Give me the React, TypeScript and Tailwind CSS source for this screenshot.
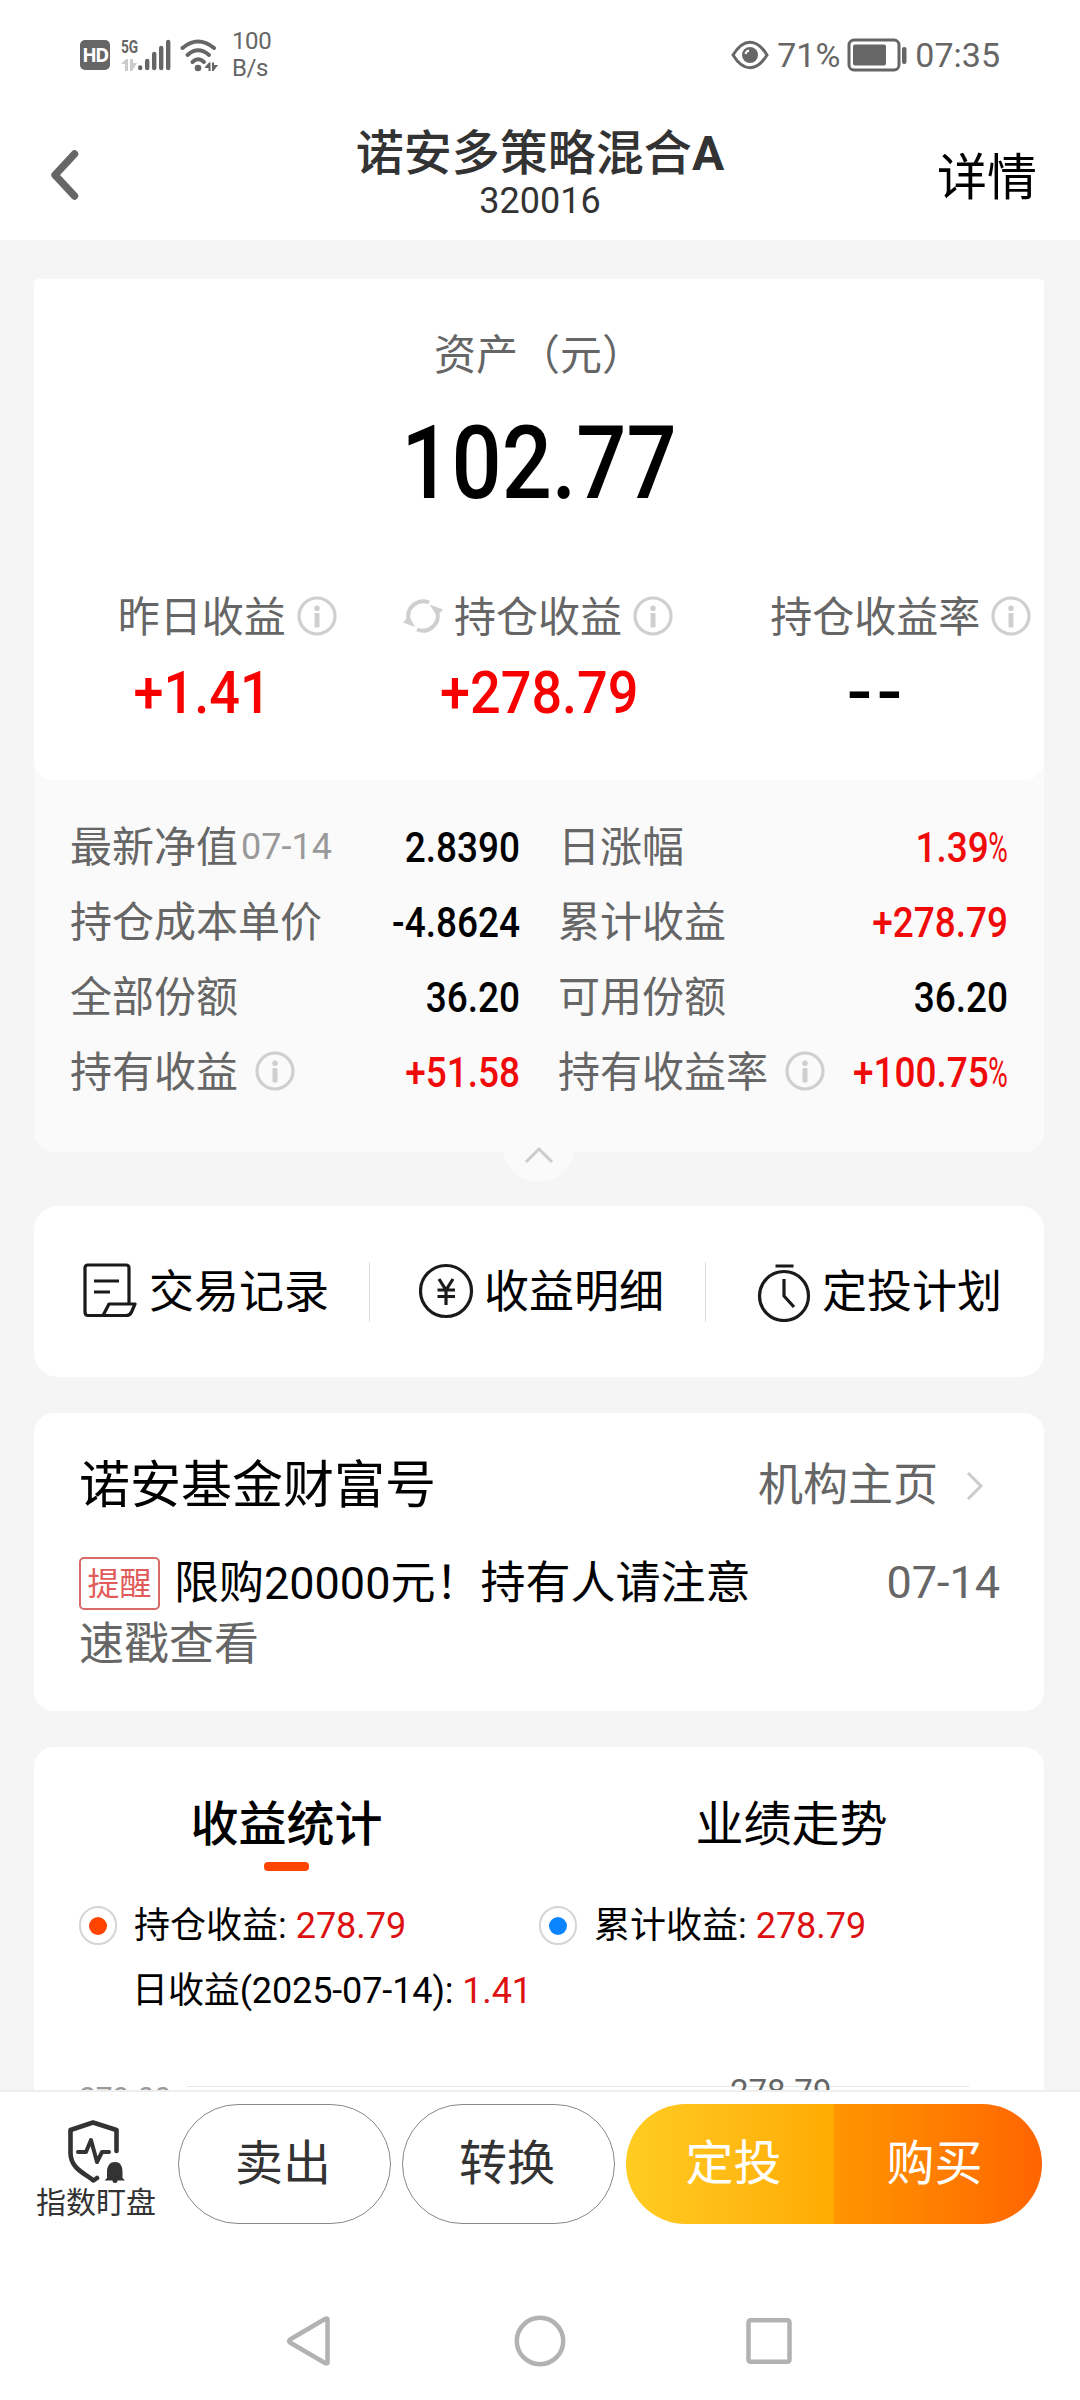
import type { ReactNode } from 'react'

type Detail = {
  label: string
  date?: string
  info?: boolean
  value: string
  percent?: boolean
  up?: boolean
}

const details: Detail[] = [
  { label: '最新净值', date: '07-14', value: '2.8390' },
  { label: '日涨幅', value: '1.39', percent: true, up: true },
  { label: '持仓成本单价', value: '-4.8624' },
  { label: '累计收益', value: '+278.79', up: true },
  { label: '全部份额', value: '36.20' },
  { label: '可用份额', value: '36.20' },
  { label: '持有收益', info: true, value: '+51.58', up: true },
  { label: '持有收益率', info: true, value: '+100.75', percent: true, up: true },
]

function InfoIcon({ className = '' }: { className?: string }) {
  return (
    <svg viewBox="0 0 40 40" className={`w-10 h-10 shrink-0 ${className}`} fill="none">
      <circle cx="20" cy="20" r="18" stroke="#cfcfcf" strokeWidth="3.2" />
      <circle cx="20" cy="12.3" r="2.8" fill="#cfcfcf" />
      <rect x="17.5" y="17" width="5" height="14.5" rx="1" fill="#cfcfcf" />
    </svg>
  )
}

function RefreshIcon({ className = '' }: { className?: string }) {
  return (
    <svg viewBox="0 0 40 36" className={`w-10 h-9 shrink-0 ${className}`} fill="none">
      <path d="M5.5 21 A15 15 0 0 1 26 4.5" stroke="#cfcfcf" strokeWidth="4" />
      <path d="M34.5 15 A15 15 0 0 1 14 31.5" stroke="#cfcfcf" strokeWidth="4" />
      <path d="M0 24.5 L6 18 L12 29 Z" fill="#cfcfcf" />
      <path d="M40 11.5 L34 18 L26.5 6.5 Z" fill="#cfcfcf" />
    </svg>
  )
}

function StatusBar() {
  return (
    <div className="flex items-center h-[110px] pl-20 pr-20 text-[#666]">
      <div className="flex items-center justify-center w-[30px] h-[30px] rounded-[5px] bg-[#666] text-white text-[19px] leading-none font-bold font-['Noto_Sans']">
        <span className="tracking-[-1.5px]">HD</span>
      </div>
      <div className="flex flex-col ml-[11px] w-[17px] h-8">
        <span className="text-[19px] leading-[15px] font-bold origin-left scale-x-[0.72]">5G</span>
        <svg viewBox="0 0 16 12" className="w-4 h-3 mt-[5px]" fill="#ccc">
          <path d="M0 5 L5 0 H7 V12 H4 V5 Z" />
          <path d="M9 0 H12 V4 H16 L11 12 H9 Z" />
        </svg>
      </div>
      <svg viewBox="0 0 34 32" className="w-[34px] h-8" stroke="#666" strokeWidth="4.4" strokeLinecap="round">
        <path d="M2.2 28.5 V29" />
        <path d="M9.2 22 V29" />
        <path d="M16.2 15 V29" />
        <path d="M23.2 9 V29" />
        <path d="M30.2 3 V29" />
      </svg>
      <svg viewBox="0 0 38 34" className="w-[38px] h-[34px] ml-2" fill="none" stroke="#666" strokeWidth="4" strokeLinecap="round">
        <path d="M2.5 10 Q18 -3 34 10" />
        <path d="M7.5 17 Q18 7.5 29 17" />
        <path d="M12.5 24 Q18 18.5 24 24" />
        <circle cx="18" cy="30" r="3.3" fill="#666" stroke="none" />
        <path d="M25 29 L29 24.5 H30.5 V33 H28.5 V30 H25 Z M32 24.5 H34 V27 H38 L33.5 33 H32 Z" fill="#666" stroke="none" />
      </svg>
      <div className="ml-[14px] text-[24px] leading-[27px] tracking-[-0.4px]">
        <p>100</p>
        <p>B/s</p>
      </div>

      <div className="flex items-center ml-auto text-[34px]">
        <svg viewBox="0 0 38 30" className="w-[38px] h-[30px]" fill="none">
          <path d="M2 15 C9 3.5 15 2.2 19 2.2 S29 3.5 36 15 C29 26.5 23 27.8 19 27.8 S9 26.5 2 15 Z" stroke="#666" strokeWidth="3" />
          <circle cx="19" cy="15" r="8" fill="#666" />
          <path d="M14.5 14 A4.5 4.5 0 0 1 18 10.5" stroke="#fff" strokeWidth="2" />
        </svg>
        <span className="ml-2 leading-none">71%</span>
        <svg viewBox="0 0 62 34" className="w-[62px] h-[34px] ml-[7px]" fill="none">
          <rect x="2" y="2" width="50" height="30" rx="5" stroke="#666" strokeWidth="3" />
          <rect x="6" y="6.5" width="33" height="21" rx="2" fill="#666" />
          <rect x="55" y="9" width="4.5" height="17" rx="2" fill="#666" />
        </svg>
        <span className="ml-[6px] leading-none">07:35</span>
      </div>
    </div>
  )
}

function TitleBar() {
  return (
    <div className="grid grid-cols-[1fr_auto_1fr] h-[130px] px-[43px]">
      <svg viewBox="0 0 30 52" className="w-[30px] h-[52px] ml-[7px] mt-[39px]" fill="none" stroke="#666" strokeWidth="7.5" strokeLinecap="round" strokeLinejoin="round">
        <path d="M24.5 5 L5 26 L24.5 47" />
      </svg>
      <div className="pt-[17px] text-center text-[#333]">
        <h1 className="text-[48px] leading-[54px] font-medium">诺安多策略混合<b>A</b></h1>
        <p className="text-[36px] leading-[41px]">320016</p>
      </div>
      <span className="justify-self-end mt-[38px] text-[50px] leading-[60px] text-black">详情</span>
    </div>
  )
}

function Stat({ label, value, up, refresh }: { label: string; value: ReactNode; up?: boolean; refresh?: boolean }) {
  return (
    <div className="flex flex-col items-center">
      <div className="flex items-center h-[50px] text-[42px] leading-[50px] text-[#666] whitespace-nowrap">
        {refresh && <RefreshIcon className="-ml-[52px] mr-[11px] -mt-1" />}
        <span>{label}</span>
        <InfoIcon className="ml-[11px] -mr-[50px] -mt-1" />
      </div>
      <p className={`mt-5 text-[60px] leading-[60px] font-medium scale-x-[0.9] ${up ? 'text-[#f80000]' : 'text-black'}`}>{value}</p>
    </div>
  )
}

function AssetCard() {
  return (
    <section className="relative rounded-t-[5px] rounded-b-[20px] bg-[#fafafa]">
      <div className="h-[501px] pt-[50px] rounded-t-[5px] rounded-b-[20px] bg-white">
        <p className="text-center text-[42px] leading-[54px] text-[#666]">资产（元）</p>
        <p className="mt-5 text-center text-[102px] leading-[120px] font-medium text-black scale-x-[0.865]">102.77</p>
        <div className="grid grid-cols-3 mt-[70px]">
          <Stat label="昨日收益" value="+1.41" up />
          <Stat label="持仓收益" value="+278.79" up refresh />
          <Stat label="持仓收益率" value={<span className="inline-block font-bold tracking-[2px] scale-x-[1.3]">--</span>} />
        </div>
      </div>

      <div className="grid grid-cols-2 gap-x-[38px] h-[372px] px-[36px] pt-[30px] content-start">
        {details.map(item => (
          <div key={item.label} className="flex items-center h-[75px] text-[42px] leading-[75px] text-[#666] whitespace-nowrap">
            <span>{item.label}</span>
            {item.date && <span className="ml-[3px] text-[36px] text-[#999]">{item.date}</span>}
            {item.info && <InfoIcon className="ml-[17px] -mt-1" />}
            <span className={`flex-1 w-0 flex justify-end font-medium origin-right scale-x-[0.88] ${item.up ? 'text-[#f00a0a]' : 'text-black'}`}>
              {item.value}
              {item.percent && <span className="font-normal origin-right scale-x-[0.72] -ml-[9px]">%</span>}
            </span>
          </div>
        ))}
      </div>

      {/* Collapse handle */}
      <div className="absolute left-[468px] -bottom-[30px] w-[73px] h-[73px] rounded-full bg-[#fafafa] flex justify-center pt-[37px]">
        <svg viewBox="0 0 30 18" className="w-[30px] h-[18px]" fill="none" stroke="#ccc" strokeWidth="3">
          <path d="M2 16 L15 3 L28 16" />
        </svg>
      </div>
    </section>
  )
}

function QuickLinks() {
  return (
    <section className="flex items-center mt-[54px] h-[171px] rounded-[24px] bg-white text-[45px] leading-[60px] text-black">
      <div className="flex items-center w-[335px] pl-[49px]">
        <svg viewBox="0 0 56 60" className="w-14 h-[60px]" fill="none" stroke="#1a1a1a" strokeWidth="3.2" strokeLinejoin="round">
          <path d="M46 42 V6 Q46 3 43 3 H5 Q2 3 2 6 V50 Q2 53.5 5 53.5 H43 Q47 53.5 48.5 50 L52 42 H26 L20 53.5" />
          <path d="M11 19 H36 M11 30 H27" />
        </svg>
        <span className="ml-[10px] pt-[3px]">交易记录</span>
      </div>
      <div className="w-px h-[60px] bg-[#ddd]" />
      <div className="flex items-center w-[335px] pl-[49px]">
        <svg viewBox="0 0 56 60" className="w-14 h-[60px]" fill="none" stroke="#1a1a1a" strokeWidth="3.2">
          <circle cx="27" cy="29" r="25.5" />
          <path d="M20 17 L27 28 L34 17 M27 28 V43 M18.5 28 H36 M18.5 34.5 H36" />
        </svg>
        <span className="ml-[9px] pt-[3px]">收益明细</span>
      </div>
      <div className="w-px h-[60px] bg-[#ddd]" />
      <div className="flex items-center flex-1 pl-[50px]">
        <svg viewBox="0 0 56 60" className="w-14 h-[60px]" fill="none" stroke="#1a1a1a" strokeWidth="3.2">
          <circle cx="28" cy="34" r="24.5" />
          <path d="M19.5 4 H37.5 M28 17 V34 L38 45" />
        </svg>
        <span className="ml-[10px] pt-[3px]">定投计划</span>
      </div>
    </section>
  )
}

function WealthAccount() {
  return (
    <section className="mt-9 h-[298px] pt-[43px] pl-[45px] pr-[44px] rounded-[20px] bg-white">
      <div className="flex items-center h-[60px]">
        <h2 className="text-[51px] leading-[60px] text-black">诺安基金财富号</h2>
        <span className="ml-auto text-[45px] leading-[60px] text-[#666]">机构主页</span>
        <svg viewBox="0 0 18 30" className="w-[18px] h-[30px] ml-[28px] mr-[16px]" fill="none" stroke="#ccc" strokeWidth="3">
          <path d="M2 2 L15 15 L2 28" />
        </svg>
      </div>
      <div className="flex items-center mt-10 h-[54px] text-[45px] leading-[54px]">
        <span className="w-[81px] h-[53px] rounded-[5px] border-2 border-[#d86a6a] text-center text-[32px] leading-[50px] text-[#e25b5b]">提醒</span>
        <span className="ml-[14px] pt-[2px] text-black">限购20000元！持有人请注意</span>
        <span className="ml-auto text-[#666]">07-14</span>
      </div>
      <p className="mt-2 text-[45px] leading-[54px] text-[#666]">速戳查看</p>
    </section>
  )
}

function Radio({ className }: { className: string }) {
  return (
    <span className="flex items-center justify-center w-[38px] h-[39px] rounded-full border-2 border-[#d5d5d5]">
      <span className={`w-[18px] h-[18px] rounded-full ${className}`} />
    </span>
  )
}

function ProfitStats() {
  return (
    <section className="mt-9 h-[500px] pt-12 rounded-t-[20px] bg-white text-black">
      <div className="grid grid-cols-2 text-center text-[48px] leading-[60px]">
        <div>
          <p className="font-medium">收益统计</p>
          <div className="mx-auto mt-[7px] w-[45px] h-[9px] rounded-[4px] bg-[#ff4400]" />
        </div>
        <p>业绩走势</p>
      </div>
      <div className="flex mt-[35px] pl-[45px] text-[36px] leading-[41px]">
        <div className="flex w-[460px] h-[39px]">
          <Radio className="bg-[#ff4400]" />
          <span className="ml-[17px]">持仓收益: <span className="text-[#dd1111]">278.79</span></span>
        </div>
        <div className="flex h-[39px]">
          <Radio className="bg-[#0a84ff]" />
          <span className="ml-[17px]">累计收益: <span className="text-[#dd1111]">278.79</span></span>
        </div>
      </div>
      <p className="mt-[26px] pl-[98px] text-[36px] leading-[40px] tracking-[-0.12px]">
        日收益(2025-07-14): <span className="text-[#dd1111]">1.41</span>
      </p>
      {/* Chart, mostly hidden behind the action bar */}
      <div className="relative h-[200px]">
        <div className="absolute left-[153px] right-[75px] top-[75px] h-px bg-[#e8e8e8]" />
        <span className="absolute left-[45px] top-[72px] text-[30px] leading-[30px] text-[#999]">279.00</span>
        <span className="absolute left-[696px] top-[64px] text-[33px] leading-[33px] text-[#666]">278.79</span>
      </div>
    </section>
  )
}

function ActionBar() {
  return (
    <div className="flex h-[170px] pt-3 border-t-2 border-[#eee] text-[48px] leading-[118px] text-[#333]">
      <div className="flex flex-col items-center w-[178px] pl-[16px] pt-[15px]">
        <svg viewBox="0 0 60 64" className="w-[60px] h-16" fill="none" stroke="#333" strokeWidth="4.6" strokeLinejoin="round" strokeLinecap="round">
          <path d="M49.5 32 V11 L26 3.5 L3.5 11 V34 C3.5 50 19 55 26.5 61.5 L30 59" />
          <path d="M11 33 H19 L24 21 L30 43 L35 33 H42" strokeWidth="4" />
          <path d="M48 43 C42 43 40 48 40 53 V59 L37.5 61.5 H58 L55.5 59 V53 C55.5 48 54 43 48 43 Z" fill="#333" stroke="none" />
          <circle cx="48" cy="61.5" r="2.5" fill="#333" stroke="none" />
        </svg>
        <span className="mt-1 -ml-[2px] w-[120px] text-[30px] leading-[32px] whitespace-nowrap">指数盯盘</span>
      </div>
      <button className="w-[213px] h-[120px] pr-[3px] rounded-full border border-[#888]">卖出</button>
      <button className="w-[213px] h-[120px] pr-[3px] ml-[11px] rounded-full border border-[#888]">转换</button>
      <div className="flex w-[416px] h-[120px] ml-[11px] rounded-full overflow-hidden text-white">
        <button className="w-1/2 pl-[7px] bg-linear-to-r from-[#ffcc22] to-[#ffaa00]">定投</button>
        <button className="w-1/2 pr-[7px] bg-linear-to-r from-[#ff9500] to-[#ff6400]">购买</button>
      </div>
    </div>
  )
}

function SystemNav() {
  return (
    <div className="flex items-center h-[140px] pl-[284px]">
      <svg viewBox="0 0 50 54" className="w-[50px] h-[54px] mt-[22px]" fill="none" stroke="#b2b2b2" strokeWidth="4.5" strokeLinejoin="round">
        <path d="M43.5 5 V49 Q43 50 41 49 L6 28.5 Q4.5 27 6 25.5 L41 5 Q43 4 43.5 5 Z" />
      </svg>
      <svg viewBox="0 0 54 54" className="w-[54px] h-[54px] ml-[179px] mt-[22px]" fill="none" stroke="#b2b2b2" strokeWidth="4.5">
        <circle cx="27" cy="27" r="23.2" />
      </svg>
      <svg viewBox="0 0 50 54" className="w-[50px] h-[54px] ml-[177px] mt-[22px]" fill="none" stroke="#b2b2b2" strokeWidth="4.5">
        <rect x="4.5" y="6.2" width="41" height="41.5" rx="2" />
      </svg>
    </div>
  )
}

export default function App() {
  return (
    <div className="flex flex-col w-[1080px] h-[2400px] overflow-hidden bg-white font-['Roboto','Noto_Sans_CJK_SC',sans-serif]">
      <header className="shrink-0">
        <StatusBar />
        <TitleBar />
      </header>
      <main className="flex-1 min-h-0 overflow-hidden pt-[39px] pl-[34px] pr-9 bg-[#f5f5f5]">
        <AssetCard />
        <QuickLinks />
        <WealthAccount />
        <ProfitStats />
      </main>
      <footer className="shrink-0 bg-white">
        <ActionBar />
        <SystemNav />
      </footer>
    </div>
  )
}
